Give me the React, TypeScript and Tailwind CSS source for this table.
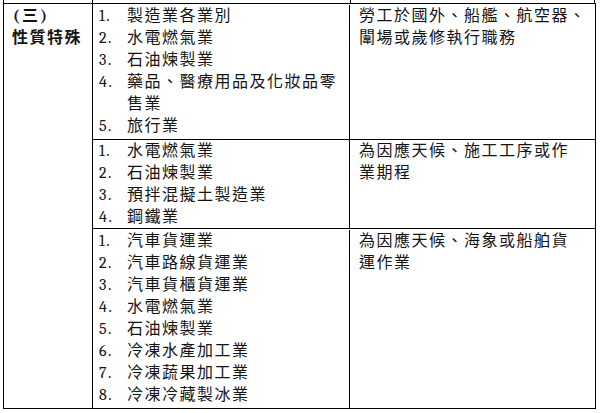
const rowOne = [
  '製造業各業別',
  '水電燃氣業',
  '石油煉製業',
  ['藥品、醫療用品及化妝品零', '售業'],
  '旅行業',
]

const rowTwo = ['水電燃氣業', '石油煉製業', '預拌混擬土製造業', '鋼鐵業']

const rowThree = [
  '汽車貨運業',
  '汽車路線貨運業',
  '汽車貨櫃貨運業',
  '水電燃氣業',
  '石油煉製業',
  '冷凍水產加工業',
  '冷凍蔬果加工業',
  '冷凍冷藏製冰業',
]

function ItemList({ items }: { items: (string | string[])[] }) {
  return (
    <div className="pl-[6px]">
      {items.map((item, i) => (
        <div key={i} className="flex">
          <span className="w-[28px] shrink-0 font-serif">{i + 1}.</span>
          <span>
            {Array.isArray(item)
              ? item.map((part, j) => <div key={j}>{part}</div>)
              : item}
          </span>
        </div>
      ))}
    </div>
  )
}

function Note({ lines }: { lines: string[] }) {
  return (
    <div className="pl-[9px]">
      {lines.map((line, i) => (
        <div key={i}>{line}</div>
      ))}
    </div>
  )
}

export default function App() {
  return (
    <div className="w-[600px] h-[413px] bg-white pl-[3px] text-[16px] leading-[22px] tracking-[1.5px] text-[#141414] font-[Liberation_Serif,Noto_Sans_CJK_TC,serif]">
      {/* table continues from above */}
      <div className="flex h-[3px]">
        <div className="w-[90px] border-l border-r border-black" />
        <div className="w-[258px] border-r border-black" />
        <div className="w-[244px] border-r border-black" />
      </div>

      <div className="flex w-[593px] border border-black">
        <div className="w-[89px] shrink-0 border-r border-black pl-[8px] pt-[1px] font-bold">
          <div className="pl-[1px] tracking-[2.5px]">
            <span className="font-serif">(</span>三<span className="font-serif">)</span>
          </div>
          <div>性質特殊</div>
        </div>

        <div className="flex-1 flex flex-col">
          <div className="flex h-[136px] border-b border-black pt-[1px]">
            <div className="w-[257px] border-r border-black">
              <ItemList items={rowOne} />
            </div>
            <div className="flex-1">
              <Note lines={['勞工於國外、船艦、航空器、', '闈場或歲修執行職務']} />
            </div>
          </div>

          <div className="flex h-[89px] border-b border-black">
            <div className="w-[257px] border-r border-black">
              <ItemList items={rowTwo} />
            </div>
            <div className="flex-1">
              <Note lines={['為因應天候、施工工序或作', '業期程']} />
            </div>
          </div>

          <div className="flex h-[179px] pt-[1px]">
            <div className="w-[257px] border-r border-black">
              <ItemList items={rowThree} />
            </div>
            <div className="flex-1">
              <Note lines={['為因應天候、海象或船舶貨', '運作業']} />
            </div>
          </div>
        </div>
      </div>
    </div>
  )
}
